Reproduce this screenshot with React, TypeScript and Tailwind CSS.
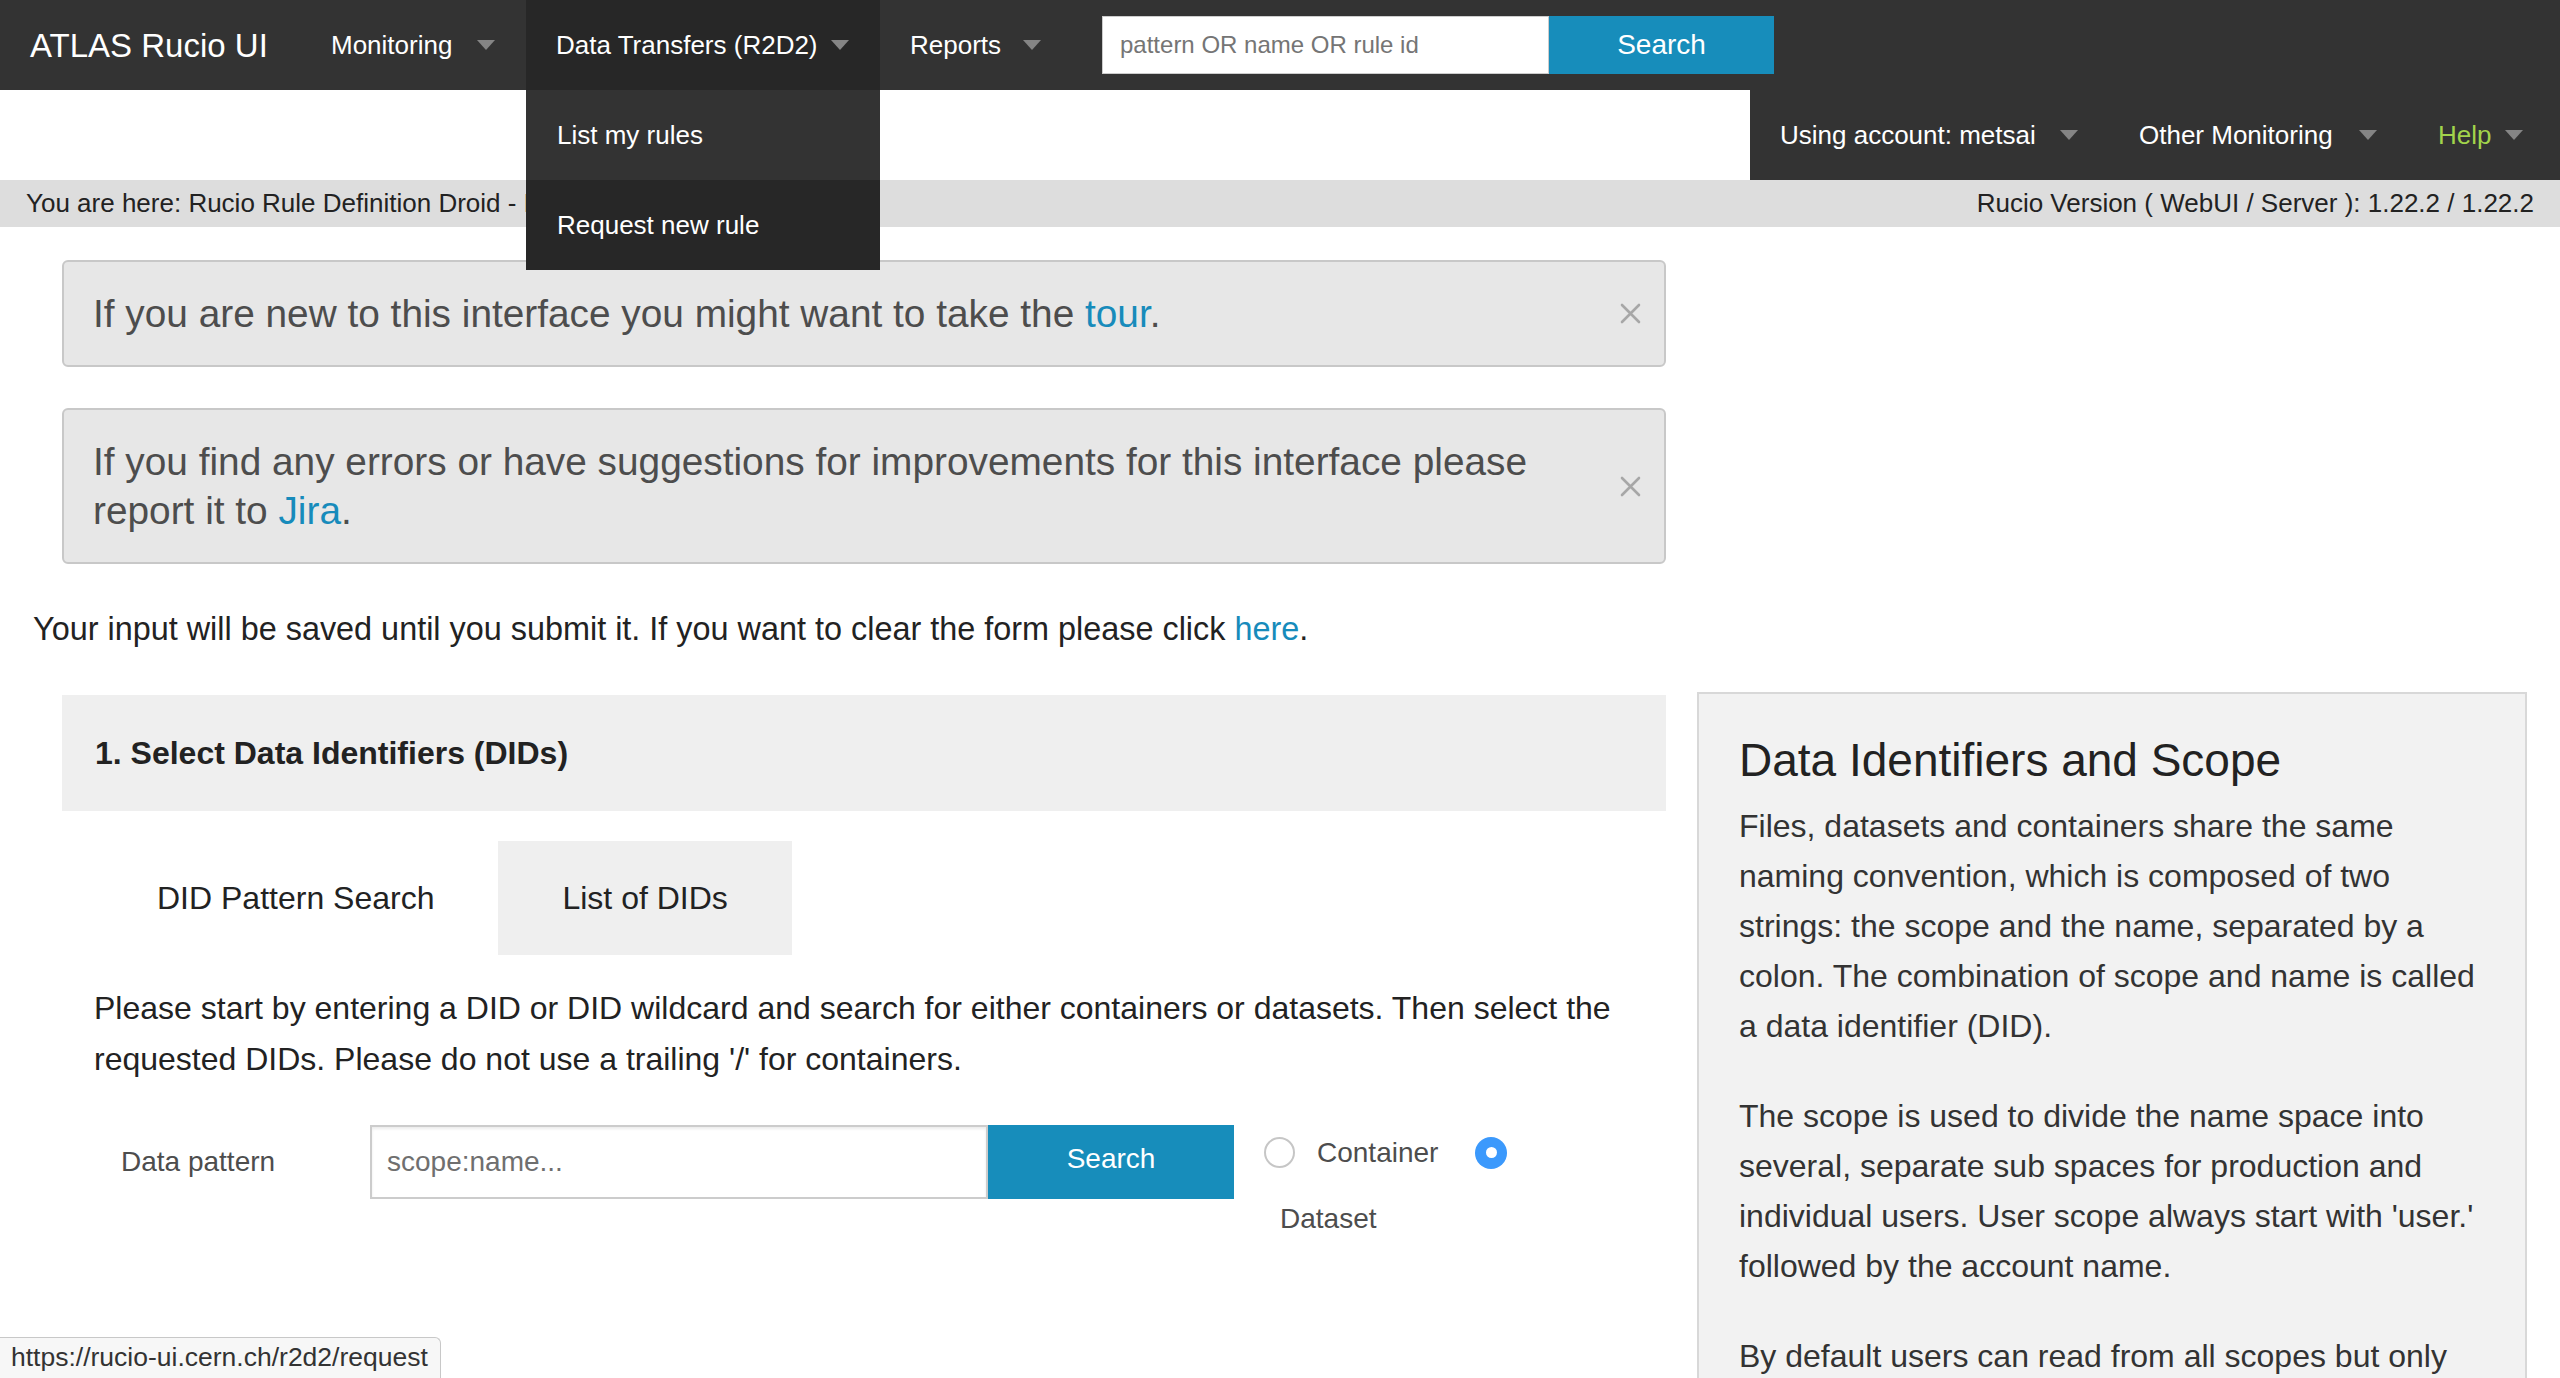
import clsx from 'clsx';

function Caret() {
  return <span className="block w-0 h-0 border-x-[9px] border-x-transparent border-t-[10px] border-t-[#858585]" />;
}

function NavItem({ label, width, active, text }: { label: string; width: string; active?: boolean; text?: string }) {
  return (
    <div className={clsx('flex h-full items-center pl-[30px] pr-[31px]', width, active && 'bg-[#272727]')}>
      <span className={clsx('flex-1 text-[26px] leading-none whitespace-nowrap', text ?? 'text-white')}>{label}</span>
      <Caret />
    </div>
  );
}

function CloseX() {
  return (
    <svg width="21" height="21" viewBox="0 0 21 21" className="shrink-0">
      <path d="M2 2 L19 19 M19 2 L2 19" stroke="#a7a7a7" strokeWidth="2.6" strokeLinecap="round" />
    </svg>
  );
}

function Alert({ children }: { children: React.ReactNode }) {
  return (
    <div className="flex items-center w-[1604px] bg-[#e7e7e7] border-2 border-[#c8c8c8] rounded-[6px] py-[27px] pl-[29px] pr-[23px]">
      <div className="flex-1 pr-[67px] text-[38.8px] leading-[49px] text-[#4d4d4d]">{children}</div>
      <CloseX />
    </div>
  );
}

export default function App() {
  return (
    <div className="relative h-[1378px] overflow-hidden bg-white font-['Liberation_Sans',Arial,sans-serif] text-[#222]">
      {/* top bar */}
      <div className="flex h-[90px] items-center bg-[#333333]">
        <div className="w-[301px] pl-[30px] text-[33px] text-white leading-none whitespace-nowrap">ATLAS Rucio UI</div>
        <NavItem label="Monitoring" width="w-[225px]" />
        <NavItem label="Data Transfers (R2D2)" width="w-[354px]" active />
        <NavItem label="Reports" width="w-[192px]" />
        <div className="ml-[30px] flex h-[58px]">
          <div className="flex w-[447px] items-center border border-[#cccccc] bg-white pl-[17px] text-[24px] text-[#757575]">
            pattern OR name OR rule id
          </div>
          <button className="w-[225px] bg-[#178dbb] text-[28px] text-white">Search</button>
        </div>
      </div>

      {/* wrapped right section */}
      <div className="flex h-[90px] justify-end">
        <div className="flex w-[810px] bg-[#333333] pr-[6px]">
          <NavItem label="Using account: metsai" width="w-[359px]" />
          <NavItem label="Other Monitoring" width="w-[299px]" />
          <NavItem label="Help" width="w-[146px]" text="text-[#a2d44b]" />
        </div>
      </div>

      {/* breadcrumb */}
      <div className="flex h-[47px] items-center justify-between bg-[#dddddd] px-[26px] text-[26px] text-[#222]">
        <span className="whitespace-nowrap">You are here: Rucio Rule Definition Droid - Request new rule</span>
        <span className="whitespace-nowrap">Rucio Version ( WebUI / Server ): 1.22.2 / 1.22.2</span>
      </div>

      {/* open dropdown */}
      <div className="absolute left-[526px] top-[90px] z-10 w-[354px] text-[26px] text-white">
        <div className="flex h-[90px] items-center bg-[#333333] pl-[31px]">List my rules</div>
        <div className="flex h-[90px] items-center bg-[#272727] pl-[31px]">Request new rule</div>
      </div>

      {/* alerts */}
      <div className="flex flex-col gap-[41px] pl-[62px] pt-[33px]">
        <Alert>
          If you are new to this interface you might want to take the <span className="text-[#178bbb]">tour</span>.
        </Alert>
        <Alert>
          If you find any errors or have suggestions for improvements for this interface please report it to{' '}
          <span className="text-[#178bbb]">Jira</span>.
        </Alert>
      </div>

      <p className="mt-[40px] pl-[33px] text-[32.4px] leading-[51px] text-[#222]">
        Your input will be saved until you submit it. If you want to clear the form please click{' '}
        <span className="text-[#178bbb]">here</span>.
      </p>

      <div className="mt-[40px] flex items-start">
        {/* left column */}
        <div className="ml-[62px] w-[1604px]">
          <div className="flex h-[116px] items-center bg-[#efefef] pl-[33px] text-[32px] font-bold text-[#222]">
            1. Select Data Identifiers (DIDs)
          </div>

          <div className="ml-[31px] mt-[30px] flex h-[114px] text-[32px] text-[#222]">
            <div className="flex items-center px-[64px]">DID Pattern Search</div>
            <div className="flex items-center bg-[#efefef] px-[64px]">List of DIDs</div>
          </div>

          <p className="mt-[28px] pl-[32px] pr-[30px] text-[32px] leading-[51px] text-[#222]">
            Please start by entering a DID or DID wildcard and search for either containers or datasets. Then select the
            requested DIDs. Please do not use a trailing '/' for containers.
          </p>

          <div className="mt-[40px] flex items-start">
            <div className="flex h-[74px] w-[308px] items-center pl-[59px] text-[28px] text-[#4d4d4d]">Data pattern</div>
            <div className="flex h-[74px] w-[618px] items-center border-2 border-[#cccccc] bg-white pl-[15px] text-[28px] text-[#6f6f6f] shadow-[inset_0_2px_3px_rgba(0,0,0,0.08)]">
              scope:name...
            </div>
            <button className="h-[74px] w-[246px] bg-[#178dbb] pb-[6px] text-[28px] text-white">Search</button>
            <div className="ml-[30px] pt-[12px] text-[28px] text-[#4d4d4d]">
              <div className="flex h-[31px] items-center">
                <span className="block h-[31px] w-[31px] rounded-full border-2 border-[#c6c6c6] bg-white" />
                <span className="ml-[22px]">Container</span>
                <span className="ml-[37px] flex h-[32px] w-[32px] items-center justify-center rounded-full bg-[#3b99fc]">
                  <span className="block h-[11px] w-[11px] rounded-full bg-white" />
                </span>
              </div>
              <div className="ml-[16px] mt-[34px] leading-[34px]">Dataset</div>
            </div>
          </div>
        </div>

        {/* right column */}
        <div className="ml-[31px] mt-[-3px] w-[830px] border-2 border-[#d8d8d8] bg-[#f2f2f2] px-[40px] pt-[34px] pb-[40px] text-[#333]">
          <h3 className="mb-[9px] text-[46px] leading-[64px] text-[#222]">Data Identifiers and Scope</h3>
          <p className="mb-[40px] text-[32px] leading-[50px]">
            Files, datasets and containers share the same naming convention, which is composed of two strings: the scope
            and the name, separated by a colon. The combination of scope and name is called a data identifier (DID).
          </p>
          <p className="mb-[40px] text-[32px] leading-[50px]">
            The scope is used to divide the name space into several, separate sub spaces for production and individual
            users. User scope always start with 'user.' followed by the account name.
          </p>
          <p className="mb-[40px] text-[32px] leading-[50px]">
            By default users can read from all scopes but only write into their own scope. Only privileged accounts have
            the right to write into multiple scopes including the production scopes.
          </p>
        </div>
      </div>

      {/* browser status bubble */}
      <div className="absolute bottom-0 left-0 z-20 flex h-[41px] w-[441px] items-center rounded-tr-[6px] border-r border-t border-[#c8c8c8] bg-[#f7f7f7] pl-[11px] text-[26.5px] text-[#333]">
        https://rucio-ui.cern.ch/r2d2/request
      </div>
    </div>
  );
}
